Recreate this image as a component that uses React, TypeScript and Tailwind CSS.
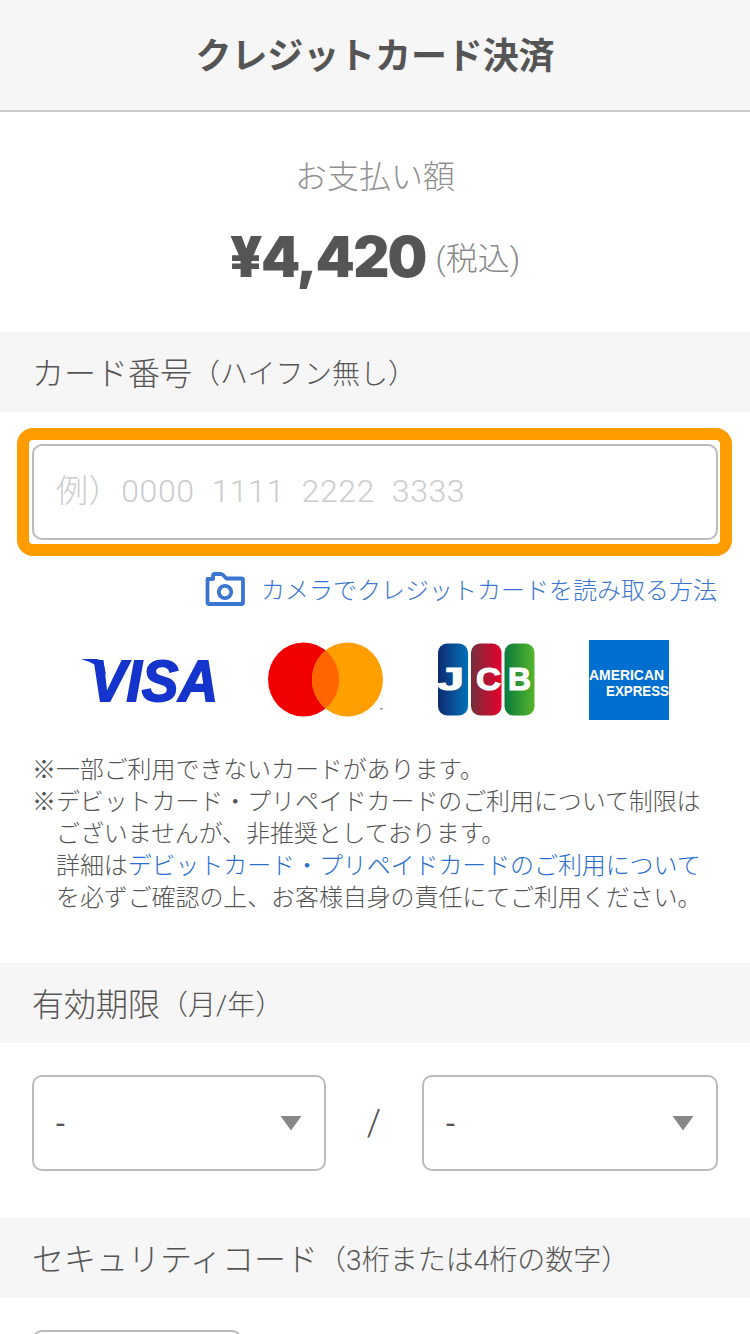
import React from "react";

const FONT = "font-['Helvetica_Neue','Roboto','Noto_Sans_CJK_JP',sans-serif]";

function SectionHead({ main, sub }: { main: string; sub: string }) {
  return (
    <div className="h-20 bg-[#f6f6f6] flex items-center pl-[32px] pt-[3px] text-[#555] font-light">
      <span className="text-[32px] leading-none">{main}</span>
      <span className="text-[28px] leading-none pt-[2px]">{sub}</span>
    </div>
  );
}

function CameraIcon() {
  return (
    <svg width="40" height="34" viewBox="0 0 40 34" className="shrink-0">
      <path d="M2.5 7 H8 V3.5 Q8 2 9.5 2 H15.5 Q17 2 18 3 L21.5 6.5 H36.5 Q38 6.5 38 8 V30.5 Q38 32 36.5 32 H4 Q2.5 32 2.5 30.5 Z" fill="none" stroke="#3a75d0" strokeWidth="3.8" strokeLinejoin="round" />
      <circle cx="20" cy="20" r="6.2" fill="none" stroke="#3a75d0" strokeWidth="3.8" />
    </svg>
  );
}

function Visa() {
  return (
    <svg width="136" height="46" viewBox="0 0 136 46" className="shrink-0" overflow="visible">
      <path d="M0 2 H15 Q21 2 23 8 L25 18 Q18 7 0 2 Z" fill="#1434cb" />
      <text x="9" y="43.5" textLength="128" lengthAdjust="spacingAndGlyphs" fontFamily="'Liberation Sans'" fontWeight="700" fontStyle="italic" fontSize="58" fill="#1434cb" stroke="#1434cb" strokeWidth="1.8">VISA</text>
    </svg>
  );
}

function Mastercard() {
  return (
    <svg width="116" height="76" viewBox="0 0 116 76" className="shrink-0">
      <defs>
        <clipPath id="mc">
          <ellipse cx="35.5" cy="37.5" rx="35.5" ry="37" />
        </clipPath>
      </defs>
      <ellipse cx="35.5" cy="37.5" rx="35.5" ry="37" fill="#f00000" />
      <ellipse cx="79.5" cy="37.5" rx="35.5" ry="37" fill="#ff9f00" />
      <ellipse cx="79.5" cy="37.5" rx="35.5" ry="37" fill="#ff6500" clipPath="url(#mc)" />
      <rect x="112" y="66" width="3" height="1.5" fill="#999" />
    </svg>
  );
}

function Jcb() {
  const letter = { fontFamily: "'Liberation Sans'", fontWeight: 700, fontSize: 32, fill: "#fff", stroke: "#fff", strokeWidth: 1.2 };
  return (
    <svg width="98" height="74" viewBox="0 0 98 74" className="shrink-0" overflow="visible">
      <defs>
        <linearGradient id="jb" x1="0" x2="1" y1="0" y2="0">
          <stop offset="0" stopColor="#0e2a70" />
          <stop offset="1" stopColor="#0072b8" />
        </linearGradient>
        <linearGradient id="jr" x1="0" x2="1" y1="0" y2="0">
          <stop offset="0" stopColor="#75303a" />
          <stop offset="1" stopColor="#e6002d" />
        </linearGradient>
        <linearGradient id="jg" x1="0" x2="1" y1="0" y2="0">
          <stop offset="0" stopColor="#0a7a3c" />
          <stop offset="1" stopColor="#55b52c" />
        </linearGradient>
      </defs>
      <rect x="1" y="0.5" width="30" height="72" rx="9" fill="url(#jb)" />
      <rect x="34" y="0.5" width="30.5" height="72" rx="9" fill="url(#jr)" />
      <rect x="67.5" y="0.5" width="30" height="72" rx="9" fill="url(#jg)" />
      <text x="0" y="47" textLength="27" lengthAdjust="spacingAndGlyphs" {...letter}>J</text>
      <text x="39" y="47" textLength="25" lengthAdjust="spacingAndGlyphs" {...letter}>C</text>
      <text x="71" y="47" textLength="23" lengthAdjust="spacingAndGlyphs" {...letter}>B</text>
    </svg>
  );
}

function Amex() {
  return (
    <svg width="80" height="80" viewBox="0 0 80 80" className="shrink-0" overflow="visible">
      <rect width="80" height="80" fill="#016fd0" />
      <text x="0" y="39.5" textLength="75" lengthAdjust="spacingAndGlyphs" fontFamily="'Liberation Sans'" fontWeight="700" fontSize="15" fill="#fff">AMERICAN</text>
      <text x="17" y="56" textLength="63" lengthAdjust="spacingAndGlyphs" fontFamily="'Liberation Sans'" fontWeight="700" fontSize="15" fill="#fff">EXPRESS</text>
    </svg>
  );
}

function SelectBox({ w }: { w: string }) {
  return (
    <div className={`${w} h-[96px] border-2 border-[#bbb] rounded-[10px] bg-white flex items-center justify-between pl-[22px] pr-[22px]`}>
      <span className="text-[32px] font-normal text-[#555] leading-none">-</span>
      <svg width="22" height="16" viewBox="0 0 22 16">
        <path d="M0.5 1 H21.5 L11 15.5 Z" fill="#888" />
      </svg>
    </div>
  );
}

export default function App() {
  return (
    <div className={`w-[750px] h-[1334px] overflow-hidden bg-white ${FONT}`}>
      <header className="h-[112px] bg-[#f6f6f6] border-b-2 border-[#ccc] flex items-center justify-center pt-[3px]">
        <h1 className="text-[36px] font-bold text-[#555] leading-none tracking-[-0.1px]">クレジットカード決済</h1>
      </header>

      <section className="h-[220px] flex flex-col items-center pt-[47px]">
        <div className="text-[32px] text-[#909090] font-light leading-[36px]">お支払い額</div>
        <div className="mt-[28px] flex items-center gap-[10px] text-[#555]">
          <span className="text-[56px] font-black leading-[68px] font-['Inter'] text-[#555] tracking-[-1.8px]">¥4,420</span>
          <span className="text-[32px] text-[#888] font-light leading-none pt-1">(税込)</span>
        </div>
      </section>

      <SectionHead main="カード番号" sub="（ハイフン無し）" />

      <div className="mx-[17px] mt-4 w-[715px] h-[128px] border-[12px] border-[#ff9c00] rounded-[16px] pl-[3px] pr-[2px] py-1">
        <div className="h-[96px] border-2 border-[#bbb] rounded-[10px] flex items-center pl-[22px] pb-[2px] text-[32px] text-[#ccc] font-light leading-none whitespace-pre tracking-[0.6px]">
          例）0000  1111  2222  3333
        </div>
      </div>

      <a className="mt-4 mr-[33px] flex items-center justify-end gap-4 text-[24px] text-[#3a75d0] font-light leading-none">
        <CameraIcon />
        <span className="pt-1">カメラでクレジットカードを読み取る方法</span>
      </a>

      <div className="mt-[34px] h-[80px] pl-[81px] flex items-center">
        <Visa />
        <div className="ml-[51px]"><Mastercard /></div>
        <div className="ml-[53px]"><Jcb /></div>
        <div className="ml-[54px]"><Amex /></div>
      </div>

      <div className="mt-[34px] pl-[32px] text-[24px] leading-[32px] text-[#555] font-light whitespace-nowrap h-[209px] tracking-[-0.1px]">
        <div>※一部ご利用できないカードがあります。</div>
        <div>※デビットカード・プリペイドカードのご利用について制限は</div>
        <div className="pl-6">
          <div>ございませんが、非推奨としております。</div>
          <div>詳細は<span className="text-[#2a6fd0]">デビットカード・プリペイドカードのご利用について</span></div>
          <div>を必ずご確認の上、お客様自身の責任にてご利用ください。</div>
        </div>
      </div>

      <SectionHead main="有効期限" sub="（月/年）" />

      <div className="h-[175px] px-8 pt-8 flex items-start justify-between">
        <SelectBox w="w-[294px]" />
        <span className="text-[36px] font-light text-[#555] leading-[96px]">/</span>
        <SelectBox w="w-[296px]" />
      </div>

      <SectionHead main="セキュリティコード" sub="（3桁または4桁の数字）" />

      <div className="mt-8 ml-8 w-[210px] h-[96px] border-2 border-[#bbb] rounded-[10px]" />
    </div>
  );
}
